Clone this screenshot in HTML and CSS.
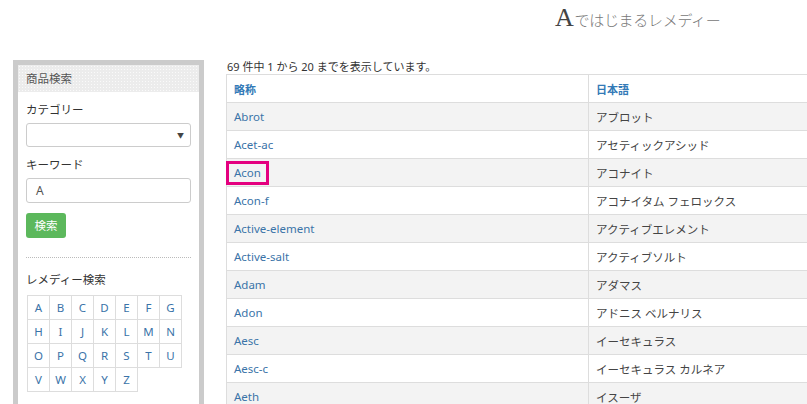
FILE: index.html
```html
<!DOCTYPE html>
<html lang="ja">
<head>
<meta charset="utf-8">
<title>Aではじまるレメディー</title>
<link rel="stylesheet" href="styles.css">
</head>
<body>
<header class="page-head">
  <h1 class="title"><span class="title-a">A</span>ではじまるレメディー</h1>
</header>
<div class="main">
  <aside class="sidebar">
    <div class="side-head">商品検索</div>
    <div class="side-body">
      <div class="label">カテゴリー</div>
      <div class="select"><span class="arrow">▼</span></div>
      <div class="label">キーワード</div>
      <div class="input">A</div>
      <div class="btn">検索</div>
      <div class="sep"></div>
      <div class="label label-r">レメディー検索</div>
      <div class="alpha">
        <a>A</a><a>B</a><a>C</a><a>D</a><a>E</a><a>F</a><a>G</a>
        <a>H</a><a>I</a><a>J</a><a>K</a><a>L</a><a>M</a><a>N</a>
        <a>O</a><a>P</a><a>Q</a><a>R</a><a>S</a><a>T</a><a>U</a>
        <a>V</a><a>W</a><a>X</a><a>Y</a><a>Z</a>
      </div>
    </div>
  </aside>
  <section class="content">
    <div class="count">69 件中 1 から 20 までを表示しています。</div>
    <table class="list">
      <thead>
        <tr><th class="c1">略称</th><th>日本語</th></tr>
      </thead>
      <tbody>
        <tr class="odd"><td><a>Abrot</a></td><td>アブロット</td></tr>
        <tr><td><a>Acet-ac</a></td><td>アセティックアシッド</td></tr>
        <tr class="odd"><td><a class="hl">Acon</a></td><td>アコナイト</td></tr>
        <tr><td><a>Acon-f</a></td><td>アコナイタム フェロックス</td></tr>
        <tr class="odd"><td><a>Active-element</a></td><td>アクティブエレメント</td></tr>
        <tr><td><a>Active-salt</a></td><td>アクティブソルト</td></tr>
        <tr class="odd"><td><a>Adam</a></td><td>アダマス</td></tr>
        <tr><td><a>Adon</a></td><td>アドニス ベルナリス</td></tr>
        <tr class="odd"><td><a>Aesc</a></td><td>イーセキュラス</td></tr>
        <tr><td><a>Aesc-c</a></td><td>イーセキュラス カルネア</td></tr>
        <tr class="odd"><td><a>Aeth</a></td><td>イスーザ</td></tr>
      </tbody>
    </table>
  </section>
</div>
</body>
</html>
```
FILE: styles.css
```css
html, body {
  margin: 0;
  padding: 0;
  background: #fff;
  overflow: hidden;
}
body {
  width: 807px;
  height: 404px;
  font-family: "Noto Sans", "Noto Sans CJK JP", sans-serif;
  font-size: 11.5px;
  color: #333;
}
.page-head {
  height: 60px;
  padding-left: 555px;
}
.title {
  margin: 0;
  padding-top: 5px;
  font-family: "Noto Sans CJK JP", sans-serif;
  font-weight: 300;
  font-size: 15px;
  line-height: 26px;
  color: #777;
  letter-spacing: -0.3px;
}
.title-a {
  font-family: "Liberation Serif", serif;
  font-size: 26px;
  font-weight: normal;
  color: #444;
  margin-right: 1px;
}
.main {
  display: flex;
  align-items: flex-start;
  padding-left: 13px;
}
.sidebar {
  width: 181px;
  height: 360px;
  border: 5px solid #cbcbcb;
  border-bottom: none;
  flex: none;
}
.side-head {
  height: 27px;
  line-height: 27px;
  padding-left: 8px;
  font-size: 11.5px;
  color: #555;
  background-color: #ececec;
  background-image: radial-gradient(circle, #fafafa 0.7px, transparent 0.8px);
  background-size: 3px 3px;
}
.side-body {
  padding: 10px 8px 0 8px;
}
.label {
  height: 16px;
  line-height: 16px;
  font-size: 11.5px;
  color: #333;
  margin-bottom: 5px;
}
.select {
  height: 22px;
  border: 1px solid #ccc;
  border-radius: 3px;
  display: flex;
  justify-content: flex-end;
  align-items: center;
  padding-right: 6px;
  margin-bottom: 10px;
}
.arrow {
  font-size: 7px;
  color: #444;
}
.input {
  height: 23px;
  line-height: 23px;
  border: 1px solid #ccc;
  border-radius: 3px;
  padding-left: 9px;
  font-size: 12px;
  color: #555;
  margin-bottom: 10px;
}
.btn {
  width: 40px;
  height: 25px;
  line-height: 25px;
  text-align: center;
  background: #5cb85c;
  color: #fff;
  border-radius: 3px;
  font-size: 11.5px;
}
.sep {
  margin-top: 19px;
  border-top: 1px dotted #bbb;
  margin-bottom: 14px;
}
.label-r {
  margin-bottom: 7px;
}
.alpha {
  display: grid;
  grid-template-columns: repeat(7, 22px);
  grid-auto-rows: 24px;
  margin-left: 1px;
  border-top: 1px solid #ddd;
  border-left: 1px solid #ddd;
  width: 154px;
}
.alpha a {
  display: flex;
  align-items: center;
  justify-content: center;
  border-right: 1px solid #ddd;
  border-bottom: 1px solid #ddd;
  color: #3a73a8;
  font-size: 11.5px;
}
.content {
  margin-left: 22px;
  width: 600px;
  flex: none;
}
.count {
  height: 14px;
  line-height: 14px;
  font-size: 11px;
  color: #333;
  padding-left: 1px;
}
.list {
  border-collapse: collapse;
  width: 640px;
  table-layout: fixed;
}
.list th, .list td {
  height: 27px;
  padding: 0 0 0 7px;
  border: 1px solid #ddd;
  text-align: left;
  vertical-align: middle;
  font-size: 11.5px;
}
.list th {
  color: #337ab7;
  font-weight: bold;
  font-family: "Noto Sans CJK JP", sans-serif;
  font-size: 11px;
}
.list th.c1 {
  width: 354px;
}
.list td {
  color: #444;
}
.list a {
  color: #3a73a8;
}
.list tr.odd td {
  background-color: #f3f3f3;
  background-image: radial-gradient(circle, #e4e4e4 0.6px, transparent 0.7px);
  background-size: 2px 2px;
}
.list a.hl {
  display: inline-block;
  margin-left: -8px;
  padding: 0 5px;
  border: 3px solid #e4007f;
  line-height: 18px;
}
```
